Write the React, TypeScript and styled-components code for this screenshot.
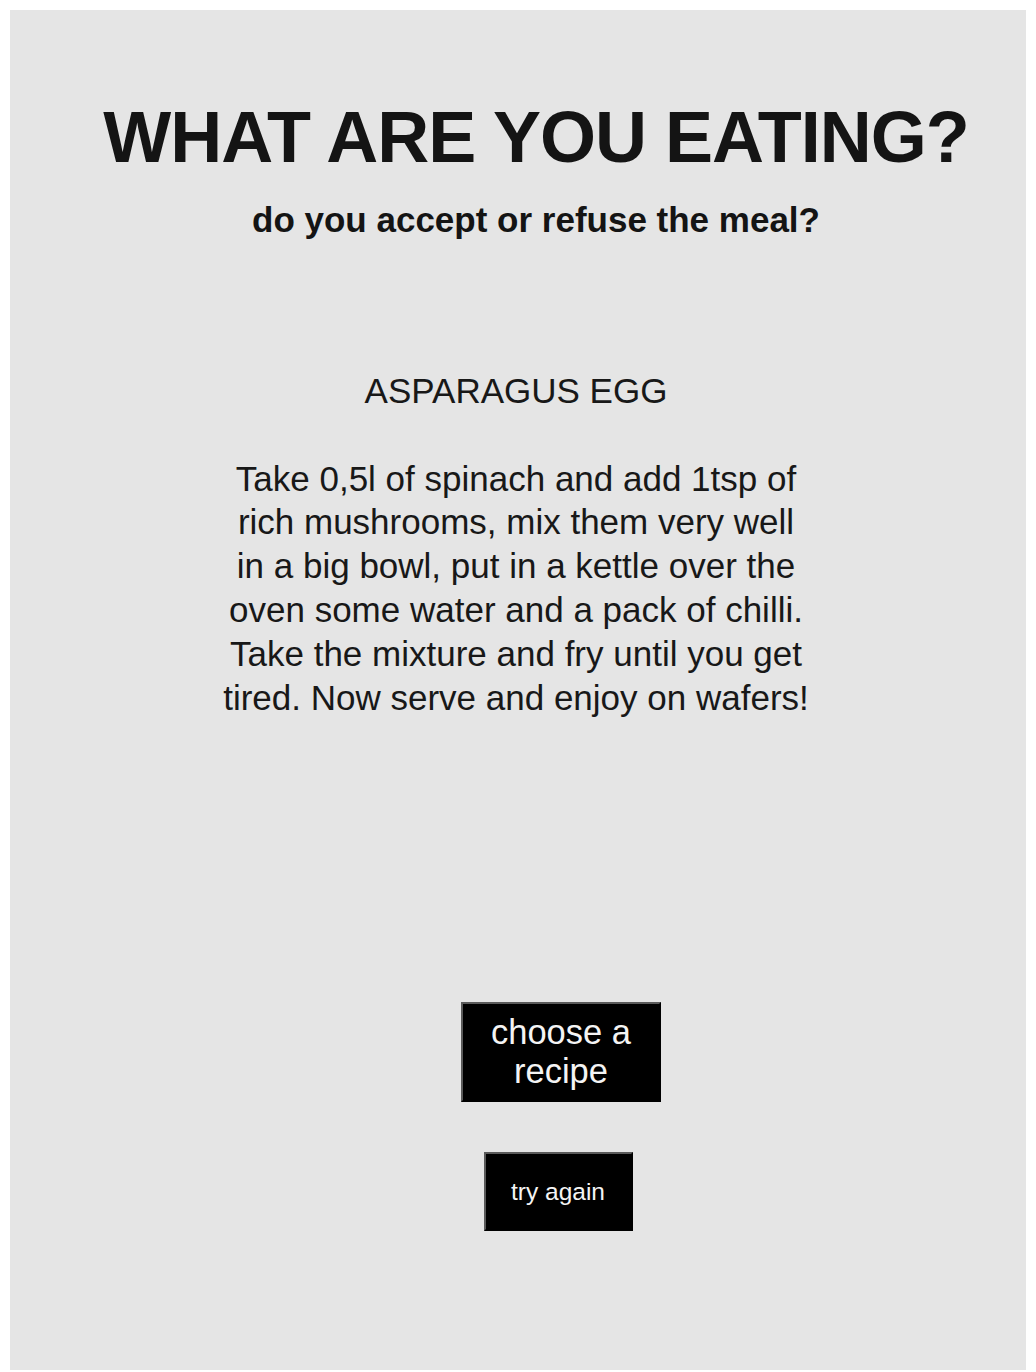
import React from "react";
import styled, { createGlobalStyle } from "styled-components";

const GlobalStyle = createGlobalStyle`
  html, body {
    margin: 0;
    padding: 0;
    background: #ffffff;
  }
  body {
    padding: 10px;
    font-family: "Liberation Sans", Arial, Helvetica, sans-serif;
  }
`;

const Page = styled.main`
  box-sizing: border-box;
  width: 1016px;
  height: 1360px;
  background: #e5e5e5;
  display: flex;
  flex-direction: column;
  align-items: stretch;
  padding-top: 86px;
  color: #161616;
`;

const Header = styled.header`
  display: flex;
  flex-direction: column;
  align-items: center;
  padding-left: 36px;
  gap: 21px;
`;

const Title = styled.h1`
  margin: 0;
  font-size: 72px;
  line-height: 1.15;
  font-weight: 700;
  letter-spacing: -1px;
  color: #141414;
`;

const Subtitle = styled.h2`
  margin: 0;
  font-size: 35px;
  line-height: 1.15;
  font-weight: 700;
  color: #141414;
`;

const Recipe = styled.p`
  margin: 129px 0 0 0;
  padding-right: 4px;
  text-align: center;
  font-size: 35px;
  line-height: 43.8px;
  font-weight: 400;
  color: #181818;
  white-space: nowrap;
`;

const ButtonColumn = styled.div`
  display: flex;
  flex-direction: column;
  align-items: center;
  padding-left: 80px;
  margin-top: 283px;
  gap: 50px;
`;

const ActionButton = styled.button<{ $size: "large" | "small"; $shift?: number }>`
  box-sizing: border-box;
  background: #000;
  color: #f4f4f4;
  border-style: solid;
  border-width: 2px;
  border-color: #5a5a5a #000 #000 #5a5a5a;
  font-family: "Liberation Sans", Arial, Helvetica, sans-serif;
  font-weight: 400;
  text-align: center;
  cursor: pointer;
  margin-left: ${(p) => (p.$shift ?? 0)}px;
  ${(p) =>
    p.$size === "large"
      ? `
    width: 200px;
    height: 100px;
    font-size: 34.5px;
    line-height: 39.7px;
    padding: 8px 6px;
  `
      : `
    width: 149px;
    height: 79px;
    font-size: 24.5px;
    line-height: 28px;
    padding: 0 10px;
  `}
`;

export default function App() {
  return (
    <>
      <GlobalStyle />
      <Page>
        <Header>
          <Title>WHAT ARE YOU EATING?</Title>
          <Subtitle>do you accept or refuse the meal?</Subtitle>
        </Header>
        <Recipe>
          ASPARAGUS EGG
          <br />
          <br />
          Take 0,5l of spinach and add 1tsp of
          <br />
          rich mushrooms, mix them very well
          <br />
          in a big bowl, put in a kettle over the
          <br />
          oven some water and a pack of chilli.
          <br />
          Take the mixture and fry until you get
          <br />
          tired. Now serve and enjoy on wafers!
        </Recipe>
        <ButtonColumn>
          <ActionButton $size="large" $shift={6}>
            choose a recipe
          </ActionButton>
          <ActionButton $size="small">try again</ActionButton>
        </ButtonColumn>
      </Page>
    </>
  );
}
